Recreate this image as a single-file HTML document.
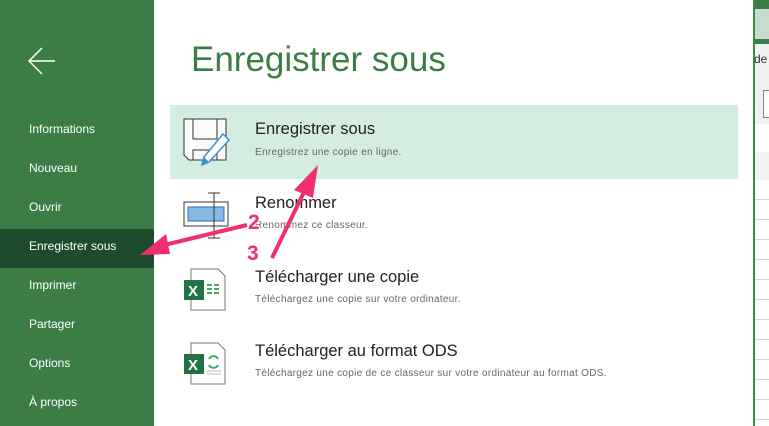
<!DOCTYPE html>
<html><head><meta charset="utf-8"><style>
body{margin:0;width:769px;height:426px;overflow:hidden;position:relative;font-family:"Liberation Sans",sans-serif;background:#fff}
.side{position:absolute;left:0;top:0;width:154px;height:426px;background:#3b7d45}
.side .m{position:absolute;left:29px;color:#fff;font-size:12px}
.sel{position:absolute;left:0;top:229px;width:154px;height:39px;background:#1f4b2d}
.right{position:absolute;left:753px;top:0;width:16px;height:426px;background:#fff;border-left:2px solid #3b8a45}
.t{position:absolute;color:#222;font-size:16.5px}
.s{position:absolute;color:#666;font-size:10px;letter-spacing:0.3px}
.n{position:absolute;color:#f0306e;font-size:21px;font-weight:bold;font-family:"Liberation Sans",sans-serif;text-shadow:0 0 2px #fff,0 0 2px #fff,0 0 2px #fff;z-index:5}
</style></head><body>
<div class="side">
<svg style="position:absolute;left:27px;top:46px" width="30" height="30"><path d="M2 15H28M15 2L2 15L15 28" stroke="#fff" stroke-width="1.5" fill="none"/></svg>
<div class="sel"></div>
<div class="m" style="top:122px">Informations</div>
<div class="m" style="top:161px">Nouveau</div>
<div class="m" style="top:200px">Ouvrir</div>
<div class="m" style="top:239px">Enregistrer sous</div>
<div class="m" style="top:278px">Imprimer</div>
<div class="m" style="top:317px">Partager</div>
<div class="m" style="top:356px">Options</div>
<div class="m" style="top:395px">À propos</div>
</div>
<div class="right">
<div style="position:absolute;left:0;top:0;width:16px;height:44px;background:#3b7d45"></div>
<div style="position:absolute;left:0;top:9px;width:16px;height:30px;background:#c6dcd0"></div>
<div style="position:absolute;left:0;top:44px;width:16px;height:80px;background:#f1f1f1"></div>
<div style="position:absolute;left:-1px;top:52px;font-size:12px;color:#333">de</div>
<div style="position:absolute;left:8px;top:90px;width:10px;height:26px;border:1px solid #888;background:#fff"></div>
<div style="position:absolute;left:0;top:152px;width:16px;height:28px;background:#f3f3f3;border-bottom:1px solid #ccc"></div>
<div style="position:absolute;left:0;top:180px;width:16px;height:246px;background:repeating-linear-gradient(#fff 0 19px,#d4d4d4 19px 20px)"></div>
</div>
<div style="position:absolute;left:191px;top:40px;font-size:35px;color:#3b7d45">Enregistrer sous</div>
<div style="position:absolute;left:170px;top:105px;width:568px;height:74px;background:#d3eee0"></div>
<svg style="position:absolute;left:183px;top:118px" width="50" height="50">
<path d="M1 1H43V42H6L1 37Z" fill="#fafafa" stroke="#333" stroke-width="1"/>
<path d="M10 1V21H34V1M10 42V32H34V42" fill="none" stroke="#333"/>
<path d="M40 16L46 22L26 44L19 47L21 39Z" fill="#fff" stroke="#3a8fd6" stroke-width="1.5"/>
<path d="M21 39L19 47L26 44Z" fill="#3a8fd6"/>
</svg>
<div class="t" style="left:255px;top:120px">Enregistrer sous</div>
<div class="s" style="left:255px;top:147px">Enregistrez une copie en ligne.</div>
<svg style="position:absolute;left:183px;top:192px" width="50" height="48">
<rect x="1" y="10" width="44" height="24" fill="#fff" stroke="#333"/>
<rect x="5" y="15" width="36" height="14" fill="#86bbe8" stroke="#2a6fba"/>
<path d="M31 1V46M25 1H37M25 46H37" stroke="#333" fill="none"/>
</svg>
<div class="t" style="left:255px;top:194px">Renommer</div>
<div class="s" style="left:255px;top:220px">Renommez ce classeur.</div>
<svg style="position:absolute;left:183px;top:268px" width="45" height="44">
<path d="M8 1H35L42 8V42H8Z" fill="#fff" stroke="#777"/>
<rect x="1" y="12" width="20" height="20" fill="#217346"/>
<text x="5" y="28" fill="#fff" font-weight="bold" font-size="15">X</text>
<path d="M24 17h5M31 17h5M24 21h5M31 21h5M24 25h5M31 25h5" stroke="#2e9d4e" stroke-width="1.8"/>
</svg>
<div class="t" style="left:255px;top:268px">Télécharger une copie</div>
<div class="s" style="left:255px;top:294px">Téléchargez une copie sur votre ordinateur.</div>
<svg style="position:absolute;left:183px;top:342px" width="45" height="44">
<path d="M8 1H35L42 8V42H8Z" fill="#fff" stroke="#777"/>
<rect x="1" y="12" width="20" height="20" fill="#217346"/>
<text x="5" y="28" fill="#fff" font-weight="bold" font-size="15">X</text>
<path d="M26 17a5 5 0 0 1 9 0M35 23a5 5 0 0 1-9 0" stroke="#35b35e" stroke-width="2" fill="none"/>
<path d="M24 29h14M24 32h14" stroke="#bbb"/>
</svg>
<div class="t" style="left:255px;top:342px">Télécharger au format ODS</div>
<div class="s" style="left:255px;top:368px">Téléchargez une copie de ce classeur sur votre ordinateur au format ODS.</div>
<svg style="position:absolute;left:0;top:0" width="769" height="426">
<path d="M247 225L160 246" stroke="#f0306e" stroke-width="4"/>
<path d="M140 255L166 234L170 254Z" fill="#f0306e"/>
<path d="M272 258L305 190" stroke="#f0306e" stroke-width="4"/>
<path d="M318 165L294 190L313 198Z" fill="#f0306e"/>
</svg>
<div class="n" style="left:248px;top:211px">2</div>
<div class="n" style="left:247px;top:242px">3</div>
</body></html>
